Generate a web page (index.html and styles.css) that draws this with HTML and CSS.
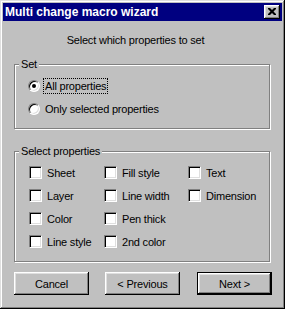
FILE: index.html
```html
<!DOCTYPE html>
<html lang="en">
<head>
    <meta charset="UTF-8">
    <title>Multi change macro wizard</title>
    <link rel="stylesheet" href="styles.css">
</head>
<body>
    <div class="window">
        <div class="titlebar">
            <span class="title">Multi change macro wizard</span>
            <div class="close-btn">
                <svg width="8" height="7" viewBox="0 0 8 7">
                    <path d="M0 0h2l2 2 2-2h2v1L5.5 3.5 8 6v1H6L4 5 2 7H0V6l2.5-2.5L0 1z" fill="#000"/>
                </svg>
            </div>
        </div>

        <div class="heading">Select which properties to set</div>

        <div class="group group-set">
            <span class="group-label">Set</span>
            <div class="radio-row">
                <span class="radio checked"></span>
                <span class="radio-text focused">All properties</span>
            </div>
            <div class="radio-row">
                <span class="radio"></span>
                <span class="radio-text">Only selected properties</span>
            </div>
        </div>

        <div class="group group-select">
            <span class="group-label">Select properties</span>
            <div class="check-grid">
                <div class="check"><span class="box"></span>Sheet</div>
                <div class="check"><span class="box"></span>Fill style</div>
                <div class="check"><span class="box"></span>Text</div>
                <div class="check"><span class="box"></span>Layer</div>
                <div class="check"><span class="box"></span>Line width</div>
                <div class="check"><span class="box"></span>Dimension</div>
                <div class="check"><span class="box"></span>Color</div>
                <div class="check"><span class="box"></span>Pen thick</div>
                <div class="check"></div>
                <div class="check"><span class="box"></span>Line style</div>
                <div class="check"><span class="box"></span>2nd color</div>
            </div>
        </div>

        <div class="buttons">
            <button class="btn">Cancel</button>
            <button class="btn btn-prev">&lt; Previous</button>
            <button class="btn btn-next">Next &gt;</button>
        </div>
    </div>
</body>
</html>
```

FILE: styles.css
```css
body {
    margin: 0;
    background-color: #c0c0c0;
    font-family: "Liberation Sans", Arial, sans-serif;
    font-size: 11px;
    letter-spacing: -0.2px;
    color: #000;
}
.window {
    width: 285px;
    height: 309px;
    box-sizing: border-box;
    padding: 3px;
    background-color: #c0c0c0;
    box-shadow: inset -1px -1px #000, inset 1px 1px #dfdfdf, inset -2px -2px #808080, inset 2px 2px #fff;
}
.titlebar {
    height: 18px;
    background-color: #000080;
    display: flex;
    align-items: center;
    justify-content: space-between;
    padding: 0 2px 0 2px;
}
.title {
    color: #fff;
    font-weight: bold;
    font-size: 12px;
    letter-spacing: 0;
}
.close-btn {
    width: 16px;
    height: 14px;
    box-sizing: border-box;
    background-color: #c0c0c0;
    box-shadow: inset -1px -1px #000, inset 1px 1px #fff, inset -2px -2px #808080, inset 2px 2px #dfdfdf;
    display: flex;
    align-items: center;
    justify-content: center;
    padding: 0 1px 1px 0;
}
.close-btn svg {
    display: block;
}
.heading {
    margin-top: 13px;
    line-height: 13px;
    text-align: center;
    padding-right: 14px;
}
/* etched frame */
.group {
    position: relative;
    margin-left: 11px;
    width: 256px;
    box-sizing: border-box;
    border: 1px solid #808080;
    box-shadow: inset 1px 1px #fff, 1px 1px #fff;
}
.group-label {
    position: absolute;
    top: -7px;
    left: 4px;
    line-height: 13px;
    padding: 0 2px;
    background-color: #c0c0c0;
}
.group-set {
    margin-top: 17px;
    height: 65px;
    padding: 13px 0 0 13px;
}
.radio-row {
    display: flex;
    align-items: center;
    height: 16px;
    margin-bottom: 7px;
}
.radio {
    position: relative;
    width: 12px;
    height: 12px;
    box-sizing: border-box;
    border-radius: 50%;
    border: 1px solid;
    border-color: #808080 #fff #fff #808080;
    background-color: #fff;
    box-shadow: inset 1px 1px #000, inset -1px -1px #dfdfdf;
    margin-right: 3px;
}
.radio.checked::after {
    content: "";
    position: absolute;
    left: 3px;
    top: 3px;
    width: 4px;
    height: 4px;
    border-radius: 50%;
    background-color: #000;
}
.radio-text {
    line-height: 14px;
    border: 1px solid transparent;
    padding: 0 1px;
}
.radio-text.focused {
    border: 1px dotted #000;
}
.group-select {
    margin-top: 22px;
    height: 111px;
    padding: 13px 0 0 14px;
}
.check-grid {
    display: grid;
    grid-template-columns: 75px 84px 1fr;
    grid-auto-rows: 15px;
    row-gap: 8px;
}
.check {
    display: flex;
    align-items: center;
    gap: 5px;
}
.box {
    width: 13px;
    height: 13px;
    box-sizing: border-box;
    border: 1px solid;
    border-color: #808080 #fff #fff #808080;
    background-color: #fff;
    box-shadow: inset 1px 1px #000, inset -1px -1px #dfdfdf;
}
.buttons {
    display: flex;
    margin-top: 10px;
    margin-left: 11px;
}
.btn {
    width: 75px;
    height: 23px;
    box-sizing: border-box;
    background-color: #c0c0c0;
    border: none;
    padding: 0;
    font-family: inherit;
    font-size: 11px;
    letter-spacing: -0.2px;
    color: #000;
    box-shadow: inset -1px -1px #000, inset 1px 1px #fff, inset -2px -2px #808080, inset 2px 2px #dfdfdf;
}
.btn-prev {
    margin-left: 16px;
}
.btn-next {
    margin-left: 17px;
    border: 1px solid #000;
}
```
